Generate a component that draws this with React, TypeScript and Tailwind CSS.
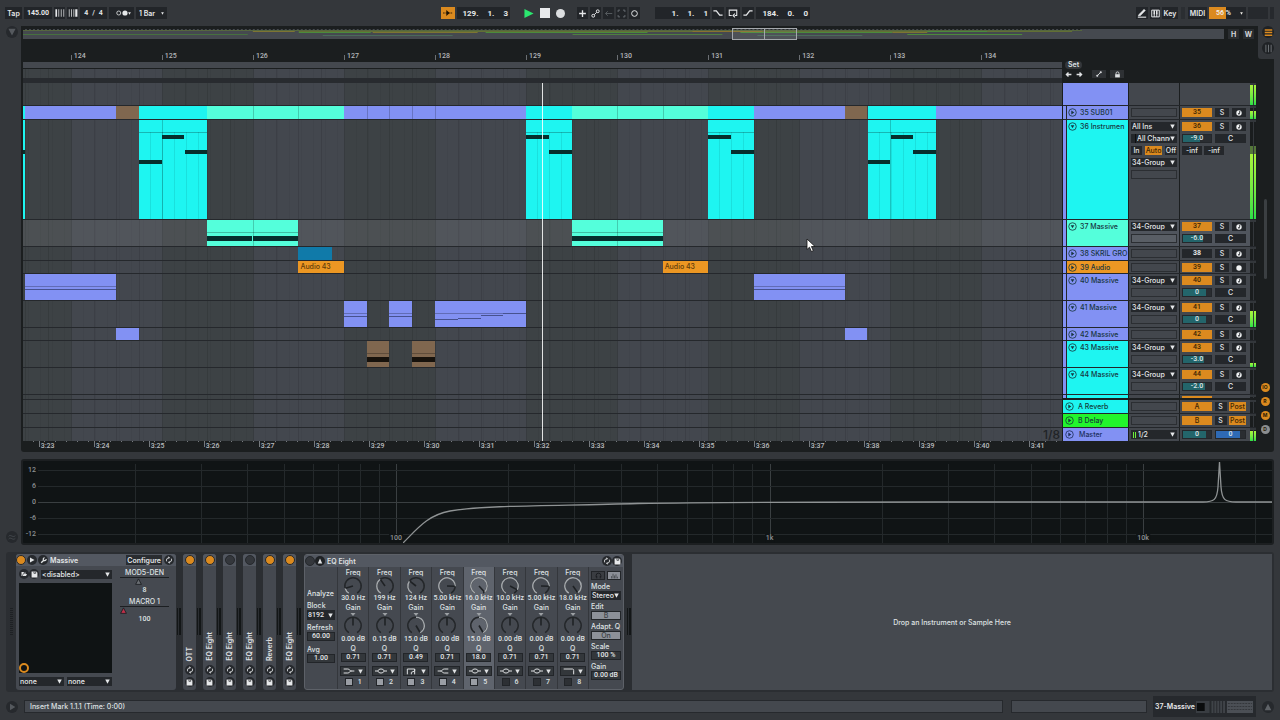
import React from 'react';

const START = 123.475;
const SPAN = 11.411;
const left = (bar: number) => `${((bar - START) / SPAN) * 100}%`;
const width = (a: number, b: number) => `${((b - a) / SPAN) * 100}%`;

type Note = { from: number; to: number; top: number; h: number };
type Clip = { from: number; to: number; tone: Tone; label?: string; notes?: Note[]; rule?: boolean; cuts?: number[]; stripes?: boolean };
type Tone = 'blue' | 'cyan' | 'mint' | 'brown' | 'ocean' | 'orange' | 'green';

const TONES: Record<Tone, string> = {
  blue: 'bg-[#8291f3]',
  cyan: 'bg-[#1ef5f1]',
  mint: 'bg-[#54ffdb]',
  brown: 'bg-[#80674f]',
  ocean: 'bg-[#107aa9]',
  orange: 'bg-[#ec9723]',
  green: 'bg-[#22f52c]',
};

const twoStep: Note[] = [
  { from: 0, to: 50, top: 15, h: 4 },
  { from: 50, to: 100, top: 30, h: 4 },
];
const threeStep: Note[] = [
  { from: 0, to: 33, top: 40, h: 4 },
  { from: 34, to: 66, top: 15, h: 4 },
  { from: 67, to: 100, top: 30, h: 4 },
];
const pair: Note[] = [
  { from: 0, to: 49.5, top: 16, h: 5 },
  { from: 50, to: 100, top: 16, h: 5 },
];
const single: Note[] = [{ from: 0, to: 100, top: 16, h: 5 }];

type Track = {
  id: string;
  name: string;
  tone: Tone;
  h: string;
  open?: boolean;
  selected?: boolean;
  muted?: boolean;
  audio?: boolean;
  full?: boolean;
  volume?: string;
  fill?: number;
  level: number;
  clips: Clip[];
};

const TRACKS: Track[] = [
  {
    id: '35', name: '35 SUB01', tone: 'blue', h: 'h-[14px]', level: 75,
    clips: [
      { from: 123.475, to: 123.5, tone: 'cyan' },
      { from: 123.5, to: 124.5, tone: 'blue' },
      { from: 124.5, to: 124.75, tone: 'brown' },
      { from: 124.75, to: 125.5, tone: 'cyan' },
      { from: 125.5, to: 127, tone: 'mint', cuts: [33.3, 66.6] },
      { from: 127, to: 129, tone: 'blue', cuts: [12.5, 25, 37.5, 50] },
      { from: 129, to: 129.5, tone: 'cyan' },
      { from: 129.5, to: 131, tone: 'mint', cuts: [33.3, 66.6] },
      { from: 131, to: 131.5, tone: 'cyan' },
      { from: 131.5, to: 132.5, tone: 'blue' },
      { from: 132.5, to: 132.75, tone: 'brown' },
      { from: 132.75, to: 133.5, tone: 'cyan' },
      { from: 133.5, to: 134.886, tone: 'blue' },
    ],
  },
  {
    id: '36', name: '36 Instrumen', tone: 'cyan', h: 'h-[100px]', open: true, full: true, volume: '-9.0', fill: 60, level: 67,
    clips: [
      { from: 123.475, to: 123.5, tone: 'cyan', notes: [{ from: 0, to: 100, top: 30, h: 4 }] },
      { from: 124.75, to: 125.5, tone: 'cyan', rule: true, stripes: true, cuts: [33.3], notes: threeStep },
      { from: 129, to: 129.5, tone: 'cyan', rule: true, stripes: true, notes: twoStep },
      { from: 131, to: 131.5, tone: 'cyan', rule: true, stripes: true, notes: twoStep },
      { from: 132.75, to: 133.5, tone: 'cyan', rule: true, stripes: true, cuts: [33.3], notes: threeStep },
    ],
  },
  {
    id: '37', name: '37 Massive', tone: 'mint', h: 'h-[27px]', open: true, selected: true, volume: '-6.0', fill: 70, level: 0,
    clips: [
      { from: 125.5, to: 126.5, tone: 'mint', rule: true, cuts: [50], notes: pair },
      { from: 129.5, to: 130.5, tone: 'mint', rule: true, cuts: [50], notes: pair },
    ],
  },
  { id: '38', name: '38 SKRIL GRO', tone: 'blue', h: 'h-[14px]', muted: true, level: 0, clips: [{ from: 126.5, to: 126.87, tone: 'ocean' }] },
  {
    id: '39', name: '39 Audio', tone: 'orange', h: 'h-[13px]', audio: true, level: 0,
    clips: [
      { from: 126.5, to: 127, tone: 'orange', label: 'Audio 43' },
      { from: 130.5, to: 131, tone: 'orange', label: 'Audio 43' },
    ],
  },
  {
    id: '40', name: '40 Massive', tone: 'blue', h: 'h-[27px]', open: true, volume: '0', fill: 82, level: 0,
    clips: [
      { from: 123.5, to: 124.5, tone: 'blue', rule: true, notes: [{ from: 0, to: 100, top: 15, h: 1 }] },
      { from: 131.5, to: 132.5, tone: 'blue', rule: true, notes: [{ from: 0, to: 100, top: 15, h: 1 }] },
    ],
  },
  {
    id: '41', name: '41 Massive', tone: 'blue', h: 'h-[27px]', open: true, volume: '0', fill: 82, level: 68,
    clips: [
      { from: 127, to: 127.25, tone: 'blue', rule: true, notes: [{ from: 0, to: 100, top: 15, h: 1 }] },
      { from: 127.5, to: 127.75, tone: 'blue', rule: true, notes: [{ from: 0, to: 100, top: 15, h: 1 }] },
      {
        from: 128, to: 129, tone: 'blue', rule: true,
        notes: [
          { from: 0, to: 25, top: 18, h: 1 },
          { from: 25, to: 50, top: 17, h: 1 },
          { from: 50, to: 75, top: 14, h: 1 },
          { from: 75, to: 100, top: 12, h: 1 },
        ],
      },
    ],
  },
  {
    id: '42', name: '42 Massive', tone: 'blue', h: 'h-[13px]', level: 0,
    clips: [
      { from: 124.5, to: 124.75, tone: 'blue' },
      { from: 132.5, to: 132.75, tone: 'blue' },
    ],
  },
  {
    id: '43', name: '43 Massive', tone: 'cyan', h: 'h-[27px]', open: true, volume: '-3.0', fill: 76, level: 16,
    clips: [
      { from: 127.25, to: 127.5, tone: 'brown', rule: true, notes: single },
      { from: 127.75, to: 128, tone: 'brown', rule: true, notes: single },
    ],
  },
  { id: '44', name: '44 Massive', tone: 'cyan', h: 'h-[27px]', open: true, volume: '-2.0', fill: 78, level: 0, clips: [] },
];

const BARS = [123, 124, 125, 126, 127, 128, 129, 130, 131, 132, 133, 134];

function BarGrid() {
  return (
    <div aria-hidden className="absolute inset-0 overflow-hidden">
      {BARS.map((b) => (
        <div
          key={b}
          className={`absolute inset-y-0 border-l border-[#373b3f] ${b % 2 ? 'bg-[#3d4245]' : 'bg-[#43474e]'}`}
          style={{ left: left(b), width: width(b, b + 1) }}
        >
          <div className="h-full bg-[repeating-linear-gradient(90deg,transparent_0_11px,#0000000b_11px_12px)]">
            <div className="flex h-full">
              {[0, 1, 2, 3].map((q) => (
                <i key={q} className={`h-full flex-1 ${q ? 'border-l border-black/10' : ''}`} />
              ))}
            </div>
          </div>
        </div>
      ))}
    </div>
  );
}

function ClipView({ c }: { c: Clip }) {
  return (
    <div className={`absolute inset-y-0 overflow-hidden ${TONES[c.tone]}`} style={{ left: left(c.from), width: width(c.from, c.to) }}>
      {c.stripes && <div className="absolute inset-x-0 top-3 bottom-0 bg-[repeating-linear-gradient(90deg,transparent_0_11px,#00505020_11px_12px)]" />}
      {c.rule && <div className="absolute inset-x-0 top-3 h-px bg-black/25" />}
      {c.cuts?.map((x) => (
        <div key={x} className="absolute inset-y-0 w-px bg-black/20" style={{ left: `${x}%` }} />
      ))}
      {c.notes?.map((n, i) => (
        <div
          key={i}
          className={`absolute ${n.h === 1 ? 'bg-[#47528f]' : c.tone === 'brown' ? 'bg-[#17120c]' : 'bg-[#062f2d]'}`}
          style={{ left: `${n.from}%`, width: `${n.to - n.from}%`, top: n.top, height: n.h }}
        />
      ))}
      {c.label && <span className="block truncate pl-[2px] leading-[12px] text-[#5f3c0b]">{c.label}</span>}
    </div>
  );
}

function Tri({ className = 'h-[5px] w-[5px]' }: { className?: string }) {
  return (
    <svg viewBox="0 0 6 6" className={`pointer-events-none shrink-0 fill-current ${className}`} aria-hidden>
      <path d="M0.3 0.5h5.4L3 5.7z" />
    </svg>
  );
}

function Pick({ label, value, className = '', lead }: { label: string; value: string; className?: string; lead?: React.ReactNode }) {
  return (
    <span className={`flex items-center bg-[#24272b] pr-[2px] text-[#e6e8ea] ${className}`}>
      {lead}
      <select aria-label={label} className="h-full min-w-0 flex-1 appearance-none bg-transparent pl-px outline-none">
        <option>{value}</option>
      </select>
      <Tri />
    </span>
  );
}

function Slot({ className = '' }: { className?: string }) {
  return <div className={`h-[9px] border border-[#2b2e32] ${className}`} />;
}

function Fader({ label, value, fill, className = '', tone = '#23656b' }: { label: string; value: string; fill: number; className?: string; tone?: string }) {
  return (
    <input
      aria-label={label}
      defaultValue={value}
      className={`h-[9px] min-w-0 border border-[#24272b] bg-[#2a2d31] text-center font-[Roboto] text-[#dfe4e6] outline-none ${className}`}
      style={{ backgroundImage: `linear-gradient(90deg, ${tone} ${fill}%, transparent ${fill}%)` }}
    />
  );
}

const CELL = 'h-[9px] bg-[#24272b] text-center text-[#e3e5e7]';
const ORANGE = 'h-[9px] bg-[#db8a1f] text-center text-[#3d2503]';

function Fold({ open }: { open?: boolean }) {
  return (
    <svg viewBox="0 0 10 10" className="h-[9px] w-[9px] shrink-0" aria-hidden>
      <circle cx="5" cy="5" r="4.2" fill="none" stroke="currentColor" strokeWidth="0.9" />
      <path d={open ? 'M3 3.6h4L5 7z' : 'M3.7 2.9v4.2L7 5z'} fill="currentColor" />
    </svg>
  );
}

function Meter({ level, peak = 0 }: { level: number; peak?: number }) {
  return (
    <div className="flex w-[6px] shrink-0 gap-px bg-[#33373b] pt-[2px]">
      {[0, 1].map((k) => (
        <div key={k} className="flex flex-1 flex-col justify-end bg-[#1a1d1e]">
          {peak > 0 && <div className="bg-[#55773a]" style={{ height: `${peak}%` }} />}
          <div className="bg-gradient-to-b from-[#a8f53c] to-[#27e046]" style={{ height: `${level}%` }} />
        </div>
      ))}
    </div>
  );
}

function RecordCell({ name, audio }: { name: string; audio?: boolean }) {
  return (
    <button aria-label={`Arm ${name}`} className="flex h-[9px] w-[14px] items-center justify-center bg-[#24272b]">
      <svg viewBox="0 0 8 8" className="h-[6px] w-[6px]" aria-hidden>
        <circle cx="4" cy="4" r="3.6" fill="#f0f2f3" />
        {!audio && <path d="M4.7 1.6v3.3M4.7 1.6l1.3.9" stroke="#24272b" strokeWidth="1" fill="none" />}
        {!audio && <circle cx="3.9" cy="5.1" r="1.1" fill="#24272b" />}
      </svg>
    </button>
  );
}

function TrackHeader({ t }: { t: Track }) {
  return (
    <div className={`flex border-b border-[#23262a] ${t.h}`}>
      <div className="w-[3px] shrink-0 bg-[#8291f3]" />
      <div className={`flex w-[62px] shrink-0 items-start gap-[3px] overflow-hidden border-l border-[#23262a] pt-[2px] pl-px text-[#17353f] ${TONES[t.tone]}`}>
        <button aria-label={`Fold ${t.name}`} className="flex">
          <Fold open={t.open} />
        </button>
        <span className="whitespace-nowrap">{t.name}</span>
      </div>
      <div className={`ml-px flex w-[50px] shrink-0 flex-col gap-[3px] overflow-hidden px-[2px] pt-[2px] ${t.selected ? 'bg-[#50555d]' : 'bg-[#43474d]'}`}>
        {t.full && (
          <>
            <Pick label="Input type" value="All Ins" className="h-[9px]" />
            <Pick label="Input channel" value="All Channel" className="h-[9px]" lead={<i className="h-full w-[5px] border-r border-black/60" />} />
            <div className="flex justify-between">
              <button className={`${CELL} w-[11px]`}>In</button>
              <button className={`${ORANGE} w-[17px]`}>Auto</button>
              <button className={`${CELL} w-[12px]`}>Off</button>
            </div>
          </>
        )}
        {t.open && <Pick label={`Output of ${t.name}`} value="34-Group" className="h-[9px]" />}
        <Slot className={t.selected ? 'bg-white/5' : ''} />
      </div>
      <div className={`ml-px flex w-[70px] shrink-0 flex-col gap-[3px] overflow-hidden pt-[2px] pr-[4px] pl-[2px] ${t.selected ? 'bg-[#50555d]' : 'bg-[#43474d]'}`}>
        <div className="flex justify-between">
          <button aria-label={`Activate ${t.name}`} className={`w-[30px] font-[Roboto] ${t.muted ? CELL + ' font-bold' : ORANGE}`}>{t.id}</button>
          <button aria-label={`Solo ${t.name}`} className={`${CELL} w-[14px]`}>S</button>
          <RecordCell name={t.name} audio={t.audio} />
        </div>
        {t.volume && (
          <div className="flex justify-between">
            <Fader label={`Volume ${t.name}`} value={t.volume} fill={t.fill ?? 0} className="w-[30px]" />
            <button aria-label={`Pan ${t.name}`} className={`${CELL} w-[31px]`}>C</button>
          </div>
        )}
        {t.full && (
          <div className="flex gap-[2px]">
            <button className={`${CELL} w-[20px]`}>-inf</button>
            <button className={`${CELL} w-[20px]`}>-inf</button>
          </div>
        )}
      </div>
      <Meter level={t.level} peak={t.full ? 8 : 0} />
    </div>
  );
}

function ReturnHeader({ id, name, tone }: { id: string; name: string; tone: Tone }) {
  return (
    <div className="flex h-[14px] border-b border-[#23262a]">
      <div className={`flex w-[65px] shrink-0 items-start gap-1 pt-[2px] pl-[2px] text-[#143a3a] ${TONES[tone]}`}>
        <button aria-label={`Fold ${name}`} className="flex"><Fold /></button>
        <span>{name}</span>
      </div>
      <div className="ml-px w-[50px] shrink-0 bg-[#43474d] px-[2px] pt-[2px]"><Slot /></div>
      <div className="ml-px flex w-[70px] shrink-0 justify-between bg-[#43474d] pt-[2px] pr-[4px] pl-[2px]">
        <button aria-label={`Activate ${name}`} className={`${ORANGE} w-[30px]`}>{id}</button>
        <button aria-label={`Solo ${name}`} className={`${CELL} w-[12px]`}>S</button>
        <button className={`${ORANGE} w-[17px]`}>Post</button>
      </div>
      <Meter level={0} />
    </div>
  );
}

function Key({ label, className = 'w-[12px]', children }: { label: string; className?: string; children: React.ReactNode }) {
  return (
    <button aria-label={label} className={`flex h-3 items-center justify-center bg-[#222529] font-semibold text-[#e6e8ea] ${className}`}>
      {children}
    </button>
  );
}

function Ico({ children, className = 'h-[10px] w-[10px]' }: { children: React.ReactNode; className?: string }) {
  return (
    <svg viewBox="0 0 12 12" className={className} fill="none" stroke="currentColor" strokeWidth="1.3" aria-hidden>
      {children}
    </svg>
  );
}

function Position({ label, parts, className = '' }: { label: string; parts: string[]; className?: string }) {
  return (
    <button aria-label={label} className={`flex h-3 items-center justify-end gap-[9px] bg-[#222529] pr-[2px] font-[Roboto] text-[8px] font-bold text-[#e6e8ea] ${className}`}>
      {parts.map((p, i) => (
        <span key={i}>{p}</span>
      ))}
    </button>
  );
}

function Toolbar() {
  return (
    <header className="flex h-[26px] items-center justify-between pr-[6px] pl-[5px]">
      <div className="flex items-center gap-[2px]">
        <Key label="Tap tempo" className="w-[17px]">Tap</Key>
        <input aria-label="Tempo" defaultValue="145.00" className="h-3 w-[28px] bg-[#222529] text-center font-[Roboto] font-bold text-[#e6e8ea] outline-none" />
        <Key label="Nudge down" className="w-[11px]">
          <Ico><path d="M1.5 1.5v9" strokeWidth="2" /><path d="M4.5 1.5v9M7.5 1.5v9M10.5 1.5v9" strokeWidth="0.9" /></Ico>
        </Key>
        <Key label="Nudge up" className="w-[11px]">
          <Ico><path d="M10 1.5v9" strokeWidth="2.6" /><path d="M1.5 1.5v9M4.2 1.5v9M7 1.5v9" strokeWidth="0.9" /></Ico>
        </Key>
        <Key label="Time signature" className="w-[27px] gap-1 font-[Roboto]"><span>4</span><span>/</span><span>4</span></Key>
        <Key label="Metronome" className="w-[25px] justify-between pr-px pl-1">
          <svg viewBox="0 0 24 12" className="h-[6px] w-[12px] shrink-0" aria-hidden>
            <circle cx="5.500" cy="6" r="4" fill="none" stroke="currentColor" strokeWidth="1.6" />
            <circle cx="18" cy="6" r="5.2" fill="currentColor" />
          </svg>
          <Tri className="h-[3px] w-[3px]" />
        </Key>
        <span className="flex h-3 w-[31px] items-center bg-[#222529] pr-[3px] font-semibold text-[#e6e8ea]">
          <select aria-label="Quantization" className="h-full min-w-0 flex-1 appearance-none bg-transparent pl-[3px] outline-none">
            <option>1 Bar</option>
          </select>
          <Tri className="h-[3px] w-[3px]" />
        </span>
      </div>

      <div className="mr-[52px] flex items-center gap-[2px]">
        <button aria-label="Follow" className="flex h-3 w-[14px] items-center justify-center bg-[#db8a1f] text-[#1d1203]">
          <Ico><path d="M0 6h11" strokeDasharray="2 1" strokeWidth="1" /><path d="M4 2.5v7L8 6z" fill="currentColor" stroke="none" /></Ico>
        </button>
        <Position label="Arrangement position" parts={['129.', '1.', '3']} className="w-[53px]" />
        <div className="flex items-center gap-[6px] pr-[10px] pl-[12px]">
          <button aria-label="Play" className="flex"><Ico className="h-[11px] w-[10px] text-[#2be76f]"><path d="M0.5 0.5v11L11.5 6z" fill="currentColor" stroke="none" /></Ico></button>
          <button aria-label="Stop" className="h-[10px] w-[10px] bg-[#e8eaec]" />
          <button aria-label="Record" className="h-[9px] w-[9px] rounded-full bg-[#dcdee0]" />
        </div>
        <Key label="Overdub" className="w-[11px]"><Ico className="h-[9px] w-[9px]"><path d="M6 1.5v9M1.5 6h9" strokeWidth="1.8" /></Ico></Key>
        <Key label="Automation arm" className="w-[11px]"><Ico className="h-[9px] w-[9px]"><circle cx="3" cy="9" r="1.9" /><circle cx="9" cy="3" r="1.9" /><path d="M4.4 7.6l3.2-3.2" /></Ico></Key>
        <Key label="Re-enable automation" className="w-[11px]"><Ico className="h-[9px] w-[9px] text-[#555a5f]"><path d="M11 6H2M5 3L2 6l3 3" /></Ico></Key>
        <Key label="Capture" className="w-[11px]"><Ico className="h-[9px] w-[9px] text-[#666b70]"><path d="M1.5 4V1.5H4M8 1.5h2.5V4M10.5 8v2.5H8M4 10.5H1.5V8" /></Ico></Key>
        <Key label="Session record" className="w-[11px]"><Ico className="h-[9px] w-[9px]"><circle cx="6" cy="6" r="3.8" /></Ico></Key>
        <div className="w-[11px]" />
        <Position label="Loop start" parts={['1.', '1.', '1']} className="w-[55px]" />
        <Key label="Punch in"><Ico><path d="M0.5 3.5H4L8 8.5h3.5" strokeWidth="1.6" /></Ico></Key>
        <Key label="Loop" className="w-[14px]"><Ico><path d="M4.5 9H1.5V2.5h9V9H8M8.3 6.7L6 9l2.3 2.3" /></Ico></Key>
        <Key label="Punch out"><Ico><path d="M0.5 8.5H4L8 3.5h3.5" strokeWidth="1.6" /></Ico></Key>
        <Position label="Loop length" parts={['184.', '0.', '0']} className="w-[54px]" />
      </div>

      <div className="flex items-center gap-[2px]">
        <Key label="Draw mode"><Ico><path d="M2 8L8.5 1.5l1.6 1.6L4 9.2l-2.5.5z" fill="currentColor" strokeWidth="0.5" /><path d="M1 11h10" /></Ico></Key>
        <Key label="Computer keyboard" className="w-[10px]">
          <Ico className="h-[9px] w-[9px]"><path d="M1 1.5h10v9H1zM4.3 6v4.5M7.7 6v4.5" /><path d="M4.3 1.5V7M7.7 1.5V7" strokeWidth="2" /></Ico>
        </Key>
        <Key label="Key map" className="w-[16px]">Key</Key>
        <i className="mx-px h-3 w-[4px] bg-[#2b2e32]" />
        <Key label="MIDI map" className="w-[19px]">MIDI</Key>
        <div className="flex h-3 w-[37px] items-center justify-between bg-[#222529] bg-linear-to-r from-[#db8a1f] from-45% to-transparent to-45% pr-[3px] pl-[7px] font-[Roboto] font-semibold text-[#f1efe9]">
          <span>56 %</span>
          <Tri className="h-[3px] w-[3px]" />
        </div>
        <i className="h-3 w-[20px] bg-[#26292d]" />
        <i className="h-3 w-[4px] bg-[#26292d]" />
      </div>
    </header>
  );
}

const OVERVIEW: [number, number, number, string][] = [
  [0, 1060, 1, '#55663f'], [0, 225, 5, '#46703f'], [230, 272, 2, '#7d7433'], [276, 348, 3, '#4b8a3c'], [276, 1050, 2, '#626f35'],
  [350, 455, 3, '#7d7433'], [463, 625, 3, '#4b8a3c'], [300, 430, 6, '#4a6a5a'], [550, 700, 5, '#4f8040'], [670, 740, 2, '#89722f'],
  [718, 870, 3, '#4b8a3c'], [735, 840, 6, '#4a6a5a'], [870, 905, 3, '#7d7433'], [905, 965, 2, '#4b8a3c'], [885, 1000, 5, '#4b8a3c'],
];

function Overview() {
  return (
    <div className="flex h-[10px] items-stretch gap-[4px] pr-[4px] pl-[2px]">
      <div className="relative flex-1 bg-[#45494f]">
        <svg viewBox="0 0 1202 10" preserveAspectRatio="none" className="h-full w-full" aria-hidden>
          <path d="M0 0.5H1060" stroke="#1b1e1f" strokeWidth="1" strokeDasharray="2 2" />
          {OVERVIEW.map(([a, b, y, c], i) => (
            <rect key={i} x={a} y={y} width={b - a} height="1" fill={c} />
          ))}
        </svg>
        <div className="absolute -top-px -bottom-px left-[59%] w-[65px] border border-[#a4a8ac] bg-white/5">
          <div className="mx-auto h-full w-px bg-[#a4a8ac]" />
        </div>
      </div>
      <button aria-label="Fit height" className="w-[11px] bg-[#2a2d30] font-bold text-[#d5d7d9]">H</button>
      <button aria-label="Fit width" className="w-[11px] bg-[#2a2d30] font-bold text-[#d5d7d9]">W</button>
    </div>
  );
}

function Ruler() {
  return (
    <div className="min-w-0 flex-1">
      <div className="relative h-[22px] overflow-hidden">
        {BARS.slice(1).map((b) => (
          <div key={b} className="absolute bottom-0 flex h-[9px] items-end gap-[2px]" style={{ left: left(b) }}>
            <i className="mb-px h-[5px] w-px bg-[#6b6f73]" />
            <span className="font-[Roboto] text-[#b4b7ba]">{b}</span>
          </div>
        ))}
      </div>
      <div className="mt-px h-[6px] bg-[#44484e]" />
      <div className="relative mt-px h-[9px]"><BarGrid /></div>
      <div className="h-[5px] bg-[#282b2f]" />
    </div>
  );
}

function SetColumn() {
  return (
    <div className="w-[196px] shrink-0 pt-[21px] pl-[3px] text-[#dfe1e3]">
      <button className="h-[8px] rounded-full bg-[#34373a] px-[3px] leading-[8px] font-semibold">Set</button>
      <div className="mt-px flex items-center">
        <button aria-label="Previous locator" className="flex w-[11px]"><Ico className="h-[7px] w-[7px]"><path d="M11 6H3M6 2.5L2.5 6 6 9.5" strokeWidth="2.4" /></Ico></button>
        <button aria-label="Next locator" className="flex w-[16px]"><Ico className="h-[7px] w-[7px]"><path d="M1 6h8M6 2.5L9.5 6 6 9.5" strokeWidth="2.4" /></Ico></button>
        <button aria-label="Automation mode" className="flex h-[8px] w-[14px] items-center justify-center bg-[#2e3134]"><Ico className="h-[6px] w-[6px]"><path d="M2.5 9.5l7-7" strokeWidth="1.8" /><circle cx="2.5" cy="9.5" r="1.5" fill="currentColor" /><circle cx="9.5" cy="2.5" r="1.5" fill="currentColor" /></Ico></button>
        <button aria-label="Lock envelopes" className="ml-1 flex h-[8px] w-[14px] items-center justify-center bg-[#2e3134]"><Ico className="h-[7px] w-[7px]"><path d="M3.5 6V4a2.5 2.5 0 015 0v2" strokeWidth="1.5" /><path d="M2 5.5h8V11H2z" fill="currentColor" stroke="none" /></Ico></button>
      </div>
    </div>
  );
}

function Lane({ h, clips, selected }: { h: string; clips: Clip[]; selected?: boolean }) {
  return (
    <div className={`flex border-b border-[#25282c] ${h}`}>
      <div className={`relative flex-1 ${selected ? 'bg-white/8' : ''}`}>
        {clips.map((c, i) => (
          <ClipView key={i} c={c} />
        ))}
      </div>
    </div>
  );
}

const SECONDS = Array.from({ length: 19 }, (_, i) => i);

function Lanes() {
  return (
    <div className="min-w-0 flex-1">
      <div className="relative">
        <BarGrid />
        <div className="relative">
          <Lane h="h-[23px]" clips={[]} />
          {TRACKS.map((t) => (
            <Lane key={t.id} h={t.h} clips={t.clips} selected={t.selected} />
          ))}
          <Lane h="h-[5px]" clips={[]} />
          <Lane h="h-[14px]" clips={[]} />
          <Lane h="h-[14px]" clips={[]} />
          <div className="h-[13px]" />
        </div>
        <span className="absolute right-[2px] bottom-0 text-[12px] leading-[13px] text-[#202326]">1/8</span>
        <div className="absolute inset-y-0 w-px bg-white/85" style={{ left: left(129.176) }} />
        <svg viewBox="0 0 10 15" className="absolute top-[155px] left-[75.4%] h-[15px] w-[10px]" aria-hidden>
          <path d="M1 1v10.5l2.5-2.3 1.9 4.3 1.900-.8-1.900-4.200H9z" fill="#fff" stroke="#111" strokeWidth="0.8" />
        </svg>
      </div>
      <div className="relative h-[11px] overflow-hidden">
        {SECONDS.map((s) => (
          <div key={s} className="absolute top-0 flex items-start gap-px" style={{ left: `${((15.7 + 55 * s) / 1039) * 100}%` }}>
            <i className="h-[6px] w-px bg-[#75797d]" />
            <span className="pt-px font-[Roboto] text-[#b9bcbf]">3:{23 + s}</span>
          </div>
        ))}
        <div className="h-px bg-[repeating-linear-gradient(90deg,transparent_0_10px,#75797d_10px_11px)]" />
      </div>
    </div>
  );
}

function Headers() {
  return (
    <div className="w-[194px] shrink-0 pl-px">
      <div className="flex h-[23px] border-b border-[#23262a]">
        <div className="w-[65px] bg-[#8291f3]" />
        <div className="ml-px w-[50px] bg-[#43474d]" />
        <div className="ml-px w-[70px] bg-[#43474d]" />
        <Meter level={100} />
      </div>
      {TRACKS.map((t) => (
        <TrackHeader key={t.id} t={t} />
      ))}
      <div className="flex h-[5px] border-b-2 border-[#1b1e1f]">
        <div className="w-[3px] bg-[#8291f3]" />
        <div className="w-[62px] border-l border-[#23262a] bg-[#1ef5f1]" />
        <div className="ml-px w-[50px] bg-[#43474d]" />
        <div className="ml-px w-[70px] bg-[#43474d] pl-[2px]"><div className="mt-px h-[2px] w-[30px] bg-[#db8a1f]" /></div>
        <Meter level={0} />
      </div>
      <ReturnHeader id="A" name="A Reverb" tone="cyan" />
      <ReturnHeader id="B" name="B Delay" tone="green" />
      <div className="flex h-[13px]">
        <div className="flex w-[65px] shrink-0 items-start gap-[5px] bg-[#8291f3] pt-[2px] pl-[2px] text-[#1c2f5c]">
          <button aria-label="Fold Master" className="flex"><Fold /></button>
          <span>Master</span>
        </div>
        <div className="ml-px w-[50px] shrink-0 bg-[#43474d] px-[2px] pt-[2px]">
          <Pick label="Master output" value="1/2" className="h-[9px]" lead={<i className="mr-px ml-[2px] flex h-[6px] w-[3px] justify-between"><b className="w-px bg-[#6cf03a]" /><b className="w-px bg-[#6cf03a]" /></i>} />
        </div>
        <div className="ml-px flex w-[70px] shrink-0 justify-between bg-[#43474d] pt-[2px] pr-[4px] pl-[2px]">
          <Fader label="Master volume" value="0" fill={82} className="w-[30px]" />
          <Fader label="Cue volume" value="0" fill={82} tone="#2e6ab5" className="w-[31px]" />
        </div>
        <Meter level={95} />
      </div>
    </div>
  );
}

function SideStrip() {
  return (
    <div className="flex w-[18px] shrink-0 flex-col items-center pt-[116px] pb-[18px]">
      <div className="h-[80px] w-[3px] rounded-full bg-[#3b3f42]" />
      <div className="mt-auto flex flex-col gap-[5px]">
        {['IO', 'R', 'M', 'D'].map((k, i) => (
          <button key={k} aria-label={`Show ${k}`} className={`h-[9px] w-[9px] rounded-full text-center text-[5px] font-bold text-[#2a1b05] ${i === 3 ? 'bg-[#8b8e90]' : 'bg-[#db8a1f]'}`}>
            {k}
          </button>
        ))}
      </div>
    </div>
  );
}

function Round({ label, children, className = '', size = 'h-3 w-3' }: { label: string; children: React.ReactNode; className?: string; size?: string }) {
  return (
    <button aria-label={label} className={`flex shrink-0 items-center justify-center rounded-full ${size} ${className}`}>
      {children}
    </button>
  );
}

function Arrangement() {
  return (
    <section aria-label="Arrangement" className="flex pr-[6px]">
      <div className="w-[21px] shrink-0 pl-[6px]">
        <Round label="Show browser" className="bg-[#26292d] text-[#55595e]"><Tri className="h-[8px] w-[8px]" /></Round>
      </div>
      <div className="min-w-0 flex-1 rounded-b-[3px] bg-[#1b1e1f]">
        <div className="flex">
          <div className="min-w-0 flex-1 pt-[3px]">
            <Overview />
            <div className="flex pl-[2px]">
              <Ruler />
              <SetColumn />
            </div>
          </div>
          <div className="w-4 shrink-0">
            <div className="flex h-[33px] flex-col items-end gap-1 rounded-bl-[3px] bg-[#34373b]">
              <Round label="Arrangement view" className="bg-[#1f2225] text-[#db8a1f]"><Ico className="h-[9px] w-[9px]"><path d="M1 2.5h10M1 6h10M1 9.5h10" strokeWidth="2" /></Ico></Round>
              <Round label="Session view" className="bg-[#1f2225] text-[#6e7276]"><Ico className="h-[9px] w-[9px]"><path d="M2.5 1v10M6 1v10M9.5 1v10" /></Ico></Round>
            </div>
          </div>
        </div>
        <div className="flex pl-[2px]">
          <Lanes />
          <Headers />
          <SideStrip />
        </div>
      </div>
    </section>
  );
}

const DECADE = 373.5;
const freqX = (hz: number) => 397 - 38 + DECADE * Math.log10(hz / 100);
const FREQS = [20, 30, 40, 50, 60, 70, 80, 90, 100, 200, 300, 400, 500, 600, 700, 800, 900, 1000, 2000, 3000, 4000, 5000, 6000, 7000, 8000, 9000, 10000, 20000];

function Spectrum() {
  return (
    <section aria-label="Equalizer curve" className="mt-[7px] flex items-end pr-[6px]">
      <div className="w-[21px] shrink-0 pb-[2px] pl-[6px]">
        <Round label="Show curve" className="bg-[#26292d] text-[#484c51]"><Ico className="h-[8px] w-[8px]"><path d="M1 5c3-4 6 3 10-1M1 9c3-4 6 3 10-1" /></Ico></Round>
      </div>
      <div className="flex min-w-0 flex-1 rounded-[3px] border-2 border-[#1c1f21] bg-[#101415]">
        <div className="w-[15px] shrink-0 pt-px text-right font-[Roboto] text-[#8e9193]">
          {['12', '6', '0', '-6', '-12'].map((v) => (
            <div key={v} className="flex h-4 items-center justify-end pr-[2px]">{v}</div>
          ))}
        </div>
        <div className="relative h-[82px] min-w-0 flex-1">
          <svg viewBox="0 0 1234 82" preserveAspectRatio="none" className="h-full w-full" aria-hidden>
            {FREQS.map((f) => (
              <rect key={f} x={Math.round(freqX(f)) - 1} y="3" width="1" height="79" fill={[100, 1000, 10000].includes(f) ? '#3a3f41' : '#24292b'} />
            ))}
            {[9, 25, 41, 57, 73].map((y) => (
              <rect key={y} x="0" y={y} width="1234" height="1" fill={y === 41 ? '#3a3f41' : '#24292b'} />
            ))}
            <path
              d="M365 82C380 67 390 54 412 50C450 44 510 45 600 42.5C680 41 760 41 900 41H1165C1176 41 1179 39 1180 26L1181.5 1L1183 26C1184 39 1187 41 1198 41H1234"
              fill="none"
              stroke="#8f9394"
              strokeWidth="1.3"
            />
          </svg>
          {[['100', 100], ['1k', 1000], ['10k', 10000]].map(([t, f]) => (
            <span
              key={t}
              className="absolute bottom-0 -translate-x-1/2 bg-[#101415] px-px font-[Roboto] text-[#8e9193]"
              style={{ left: `${((freqX(f as number) - 1) / 1234) * 100}%` }}
            >
              {t}
            </span>
          ))}
        </div>
      </div>
    </section>
  );
}

function Led({ label, on }: { label: string; on?: boolean }) {
  return <button aria-label={label} className={`h-[10px] w-[10px] shrink-0 rounded-full border border-[#26292d] ${on ? 'bg-[#db8a1f]' : 'bg-[#34373c]'}`} />;
}

const SMALL = 'h-[10px] w-[10px]';

function Swap() {
  return (
    <Round label="Hot swap" size={SMALL} className="bg-[#26292d] text-[#d8dadc]">
      <Ico className="h-[8px] w-[8px]"><path d="M2.5 8a4 4 0 013-5.5M9.5 4a4 4 0 01-3 5.5" strokeWidth="1.5" /><path d="M5 0.5l2.6 2L5 4.5zM7 7.5l-2.6 2 2.6 2z" fill="currentColor" stroke="none" /></Ico>
    </Round>
  );
}

function Save() {
  return (
    <Round label="Save preset" size={SMALL} className="bg-[#26292d] text-[#e6e8ea]">
      <Ico className="h-[7px] w-[7px]"><path d="M1 1h8l2 2v8H1z" fill="currentColor" stroke="none" /><path d="M5 1v3h3V1" stroke="#26292d" strokeWidth="1.2" /></Ico>
    </Round>
  );
}

function Param({ name, value, pos, red }: { name: string; value: string; pos: string; red?: boolean }) {
  return (
    <div className="text-center text-[#dfe1e3]">
      <div className="leading-[9px]">{name}</div>
      <div className="h-px bg-[#1c1f22]" />
      <div className={`h-[8px] ${pos}`}>
        <svg viewBox="0 0 8 8" className="h-[7px] w-[7px]" aria-hidden>
          <path d="M4 1L7.3 7.3H0.7z" fill={red ? '#c2304a' : '#6a6e73'} stroke="#1c1f22" strokeWidth="1" />
        </svg>
      </div>
      <div className="font-[Roboto] leading-[9px]">{value}</div>
    </div>
  );
}

function Massive() {
  return (
    <article className="w-[160px] shrink-0 overflow-hidden rounded-[3px] bg-[#454950] text-[#e3e5e7]">
      <div className="flex h-3 items-center gap-[1px] bg-[#535861] pr-[2px]">
        <Led label="Massive on" on />
        <Round label="Unfold" size={SMALL} className="bg-[#26292d]"><Ico className="h-[6px] w-[6px]"><path d="M2 1v10L11 6z" fill="currentColor" stroke="none" /></Ico></Round>
        <Round label="Edit plug-in" size={SMALL} className="bg-[#26292d]"><Ico className="h-[7px] w-[7px]"><path d="M2 10l4.5-4.5" strokeWidth="2.4" /><path d="M10.5 3.5A2.5 2.5 0 118 1.3" strokeWidth="2" /></Ico></Round>
        <span className="ml-px flex-1 font-semibold">Massive</span>
        <button className="h-[10px] bg-[#2a2d31] px-px font-semibold">Configure</button>
        <span className="ml-px"><Swap /></span>
      </div>
      <div className="flex">
        <div className="ml-[3px] w-[93px] pt-[3px]">
          <div className="flex h-[10px] items-center">
            <Round label="Load" size={SMALL} className="bg-[#26292d]"><Ico className="h-[6px] w-[6px]"><path d="M1 2h4l1 1.5h4V5H4L2.5 10H1zM5 6h7l-2 4H3.5z" fill="currentColor" stroke="none" /></Ico></Round>
            <Save />
            <Pick label="Preset" value="<disabled>" className="ml-[2px] h-[9px] min-w-0 flex-1" />
          </div>
          <div className="mt-1 flex h-[90px] items-end bg-[#0f1314]">
            <div className="h-[10px] w-[10px] rounded-full border-2 border-[#db8a1f]" />
          </div>
          <div className="mt-1 flex gap-[3px]">
            <Pick label="X parameter" value="none" className="h-[9px] min-w-0 flex-1" />
            <Pick label="Y parameter" value="none" className="h-[9px] min-w-0 flex-1" />
          </div>
        </div>
        <div className="mr-[7px] ml-2 flex flex-1 flex-col gap-[2px] pt-[2px]">
          <Param name="MOD5-DEN" value="8" pos="pl-[15px]" />
          <Param name="MACRO 1" value="100" pos="" red />
        </div>
      </div>
    </article>
  );
}

function SlimMeter() {
  return (
    <div className="mt-[54px] flex h-[27px] w-[4px] shrink-0 justify-between">
      <i className="w-[1px] bg-[#131617]" />
      <i className="w-[2px] bg-[#131617]" />
    </div>
  );
}

function Folded({ name, on }: { name: string; on?: boolean }) {
  return (
    <article className="flex w-[13px] shrink-0 flex-col items-center overflow-hidden rounded-[3px] bg-[#454950] pb-[3px] text-[#e3e5e7]">
      <div className="flex h-3 w-full items-center justify-center bg-[#535861]"><Led label={`${name} on`} on={on} /></div>
      <span className="mt-auto mb-1 rotate-180 leading-[11px] font-semibold [writing-mode:vertical-rl]">{name}</span>
      <Swap />
      <div className="h-[2px]" />
      <Save />
    </article>
  );
}

const polar = (deg: number, r: number, cy: number) => {
  const a = ((deg - 90) * Math.PI) / 180;
  return `${(10 + r * Math.cos(a)).toFixed(2)} ${(cy + r * Math.sin(a)).toFixed(2)}`;
};
const arc = (a: number, b: number, cy: number) => `M${polar(a, 8.2, cy)}A8.2 8.2 0 ${b - a > 180 ? 1 : 0} 1 ${polar(b, 8.2, cy)}`;

function Knob({ angle, from, gain }: { angle: number; from: number; gain?: boolean }) {
  const h = gain ? 23 : 17;
  const cy = gain ? 13.5 : 9;
  return (
    <svg viewBox={`0 0 20 ${h}`} className={gain ? 'h-[23px] w-[20px]' : 'h-[17px] w-[20px]'} fill="none" aria-hidden>
      {gain && <path d="M7.5 1h5L10 4z" fill="#9da1a5" />}
      <path d={arc(-150, 150, cy)} stroke="#24272a" strokeWidth="1.5" />
      {angle !== from && <path d={arc(from, angle, cy)} stroke="#a2a6aa" strokeWidth="1.5" />}
      <path d={`M10 ${cy}L${polar(angle, 7.8, cy)}`} stroke="#1f2225" strokeWidth="1.6" />
    </svg>
  );
}

type Band = { freq: string; fa: number; gain: string; ga: number; q: string; shape: string; on: boolean };
const LOWCUT = 'M1 3h6c3 0 3 3 6 3h4M1 9h6c3 0 3-3 6-3';
const BELL = 'M0 6h4M14 6h4M4 6c2-4 8-4 10 0M4 6c2 4 8 4 10 0';
const HIGH = 'M17 3h-6C8 3 8 6 5 6H1M17 9h-6C8 9 8 6 5 6';
const BANDS: Band[] = [
  { freq: '30.0 Hz', fa: -106, gain: '0.00 dB', ga: 0, q: '0.71', shape: LOWCUT, on: true },
  { freq: '199 Hz', fa: -35, gain: '0.15 dB', ga: 0, q: '0.71', shape: BELL, on: true },
  { freq: '124 Hz', fa: -52, gain: '15.0 dB', ga: 150, q: '0.49', shape: 'M2 11V3h11v3M8 11V8l5-2M13 3v8', on: true },
  { freq: '5.00 kHz', fa: 92, gain: '0.00 dB', ga: 0, q: '0.71', shape: HIGH, on: true },
  { freq: '16.0 kHz', fa: 138, gain: '15.0 dB', ga: 150, q: '18.0', shape: BELL, on: true },
  { freq: '10.0 kHz', fa: 118, gain: '0.00 dB', ga: 0, q: '0.71', shape: BELL, on: false },
  { freq: '5.00 kHz', fa: 92, gain: '0.00 dB', ga: 0, q: '0.71', shape: BELL, on: false },
  { freq: '18.0 kHz', fa: 145, gain: '0.00 dB', ga: 0, q: '0.71', shape: 'M1 3h13c1.5 0 2 1 2 2v6', on: false },
];

const FIELD = 'h-[9px] min-w-0 border border-[#222529] bg-[#33373b] text-center font-[Roboto] text-[#e3e5e7] outline-none';

function BandColumn({ b, n }: { b: Band; n: number }) {
  const hot = n === 5;
  return (
    <div className={`flex min-w-0 flex-1 flex-col items-center border-l border-[#34373c] pt-px whitespace-nowrap ${hot ? 'bg-[#5f646d]' : ''}`}>
      <span>Freq</span>
      <Knob angle={b.fa} from={-150} />
      <span className="font-[Roboto]">{b.freq}</span>
      <span>Gain</span>
      <Knob angle={b.ga} from={0} gain />
      <span className="font-[Roboto]">{b.gain}</span>
      <span>Q</span>
      <input aria-label={`Q of band ${n}`} defaultValue={b.q} className={`${FIELD} w-[25px]`} />
      <button aria-label={`Filter type of band ${n}`} className="mt-1 flex h-[10px] w-[26px] items-center justify-between border border-[#222529] bg-[#33373b] px-[2px]">
        <svg viewBox="0 0 18 12" className="h-[8px] w-[12px]" fill="none" stroke="currentColor" strokeWidth="1.5" aria-hidden><path d={b.shape} /></svg>
        <Tri />
      </button>
      <label className="mt-px flex h-[10px] items-center gap-[5px] font-[Roboto]">
        <input type="checkbox" defaultChecked={b.on} className="h-[8px] w-[8px] appearance-none border border-[#222529] bg-[#2d3034] checked:bg-[#9a9ea5]" />
        {n}
      </label>
    </div>
  );
}

function EqEight() {
  return (
    <article className="w-[320px] shrink-0 overflow-hidden rounded-[3px] border border-[#5d6168] bg-[#454950] text-[#dfe1e3]">
      <div className="flex h-3 items-center bg-[#535861] pr-px">
        <Led label="EQ Eight on" />
        <Round label="Unfold EQ" size={SMALL} className="bg-[#1f2225]"><Ico className="h-[6px] w-[6px]"><path d="M6 1l4.5 10h-9z" fill="currentColor" stroke="none" /></Ico></Round>
        <span className="ml-[2px] flex-1 font-semibold">EQ Eight</span>
        <Swap />
        <Save />
      </div>
      <div className="flex h-[122px]">
        <div className="flex w-[32px] shrink-0 flex-col px-[2px] pt-[22px]">
          <span>Analyze</span>
          <span className="mt-[3px]">Block</span>
          <Pick label="Block size" value="8192" className="h-[10px] w-[28px] font-[Roboto]" />
          <label htmlFor="refresh" className="mt-[3px]">Refresh</label>
          <input id="refresh" defaultValue="60.00" className={`${FIELD} w-[28px]`} />
          <label htmlFor="avg" className="mt-1">Avg</label>
          <input id="avg" defaultValue="1.00" className={`${FIELD} w-[28px]`} />
        </div>
        {BANDS.map((b, i) => (
          <BandColumn key={i} b={b} n={i + 1} />
        ))}
        <div className="flex w-[35px] shrink-0 flex-col border-l border-[#34373c] px-[2px] pt-1">
          <div className="flex justify-between">
            <button aria-label="Audition" className="flex h-[9px] w-[14px] items-center justify-center border border-[#222529] bg-[#3a3d42] text-[#14171a]"><Ico className="h-[7px] w-[7px]"><path d="M2 9V6a4 4 0 018 0v3M3 7v4M9 7v4" /></Ico></button>
            <button aria-label="Analyzer" className="flex h-[9px] w-[14px] items-center justify-center border border-[#222529] bg-[#8c9098] text-[#3c4045]"><Ico className="h-[7px] w-[9px]"><path d="M1 11V7M3.5 11V3M6 11V6M8.5 11V4M11 11V8" /></Ico></button>
          </div>
          <span className="mt-[2px]">Mode</span>
          <Pick label="Mode" value="Stereo" className="h-[9px]" />
          <span className="mt-[2px]">Edit</span>
          <button aria-label="Edit channel" className="h-[9px] border border-[#222529] bg-[#8c9098] text-[#3c4045] leading-[8px]">B</button>
          <span className="mt-[2px] whitespace-nowrap">Adapt. Q</span>
          <button aria-label="Adaptive Q" className="h-[9px] border border-[#222529] bg-[#8c9098] text-[#3c4045] leading-[8px]">On</button>
          <label htmlFor="scale" className="mt-[2px]">Scale</label>
          <input id="scale" defaultValue="100 %" className={FIELD} />
          <label htmlFor="gain" className="mt-[2px]">Gain</label>
          <input id="gain" defaultValue="0.00 dB" className={FIELD} />
        </div>
      </div>
    </article>
  );
}

const CHAIN: [string, boolean][] = [['OTT', true], ['EQ Eight', true], ['EQ Eight', false], ['EQ Eight', false], ['Reverb', true], ['EQ Eight', true]];

function Devices() {
  return (
    <section aria-label="Devices" className="mx-[6px] mt-[7px] flex rounded-[3px] bg-[#2b2e32] py-[2px]">
      <div className="flex w-[10px] shrink-0 items-center justify-center">
        <i className="h-[28px] w-[3px] bg-[repeating-linear-gradient(180deg,#1e2124_0_1px,transparent_1px_2px)]" />
      </div>
      <Massive />
      <div className="ml-px flex gap-px">
        {CHAIN.map(([n, on], i) => (
          <div key={i} className="flex gap-[2px]">
            <SlimMeter />
            <Folded name={n} on={on} />
          </div>
        ))}
        <SlimMeter />
      </div>
      <div className="ml-[3px] flex"><EqEight /></div>
      <div className="ml-[3px] flex"><SlimMeter /></div>
      <div className="mr-[2px] ml-px flex min-w-0 flex-1 items-center justify-center bg-[#45494f] text-[#dfe1e3]">
        Drop an Instrument or Sample Here
      </div>
    </section>
  );
}

function StatusBar() {
  return (
    <footer className="flex h-[29px] items-center pr-[6px] pl-[6px]">
      <Round label="Show help" className="bg-[#26292d] text-[#55595e]"><Ico className="h-[8px] w-[8px]"><path d="M3 1v10l8-5z" fill="currentColor" stroke="none" /></Ico></Round>
      <div className="ml-[6px] h-[13px] min-w-0 flex-1 border border-[#26292d] bg-[#44484e] pl-[5px] leading-[11px] text-[#dfe1e3]">Insert Mark 1.1.1 (Time: 0:00)</div>
      <div className="ml-2 h-[13px] w-[136px] border border-[#26292d] bg-[#44484e]" />
      <div className="ml-[6px] flex h-[21px] w-[103px] items-center justify-between bg-[#26292d] px-[2px] font-semibold whitespace-nowrap text-[#e6e8ea]">
        37-Massive
        <svg viewBox="0 0 60 12" className="h-3 w-[58px] shrink-0" preserveAspectRatio="none" aria-hidden>
          <rect x="0" y="0" width="14" height="12" fill="#393d42" />
          <rect x="1" y="2" width="8" height="8" fill="#0a0c0d" />
          {[16, 19, 22, 25, 28].map((x) => <rect key={x} x={x} y="0" width="2" height="12" fill="#3f4348" />)}
          <rect x="32" y="0" width="27" height="12" fill="#4b4f55" />
          <path d="M33 2.5h25M33 5.5h25M33 8.5h25" stroke="#34373b" strokeDasharray="2 1" />
        </svg>
      </div>
      <Round label="Hide devices" className="ml-[6px] bg-[#26292d] text-[#5f6368]"><Ico className="h-[8px] w-[8px]"><path d="M6 1l5 10H1z" fill="currentColor" stroke="none" /></Ico></Round>
    </footer>
  );
}

export default function App() {
  return (
    <main className="flex min-h-screen flex-col bg-[#34373b] text-[7px] leading-[9px] font-medium text-[#dfe1e3] [font-family:Inter,Roboto,sans-serif]">
      <Toolbar />
      <Arrangement />
      <Spectrum />
      <Devices />
      <StatusBar />
    </main>
  );
}
